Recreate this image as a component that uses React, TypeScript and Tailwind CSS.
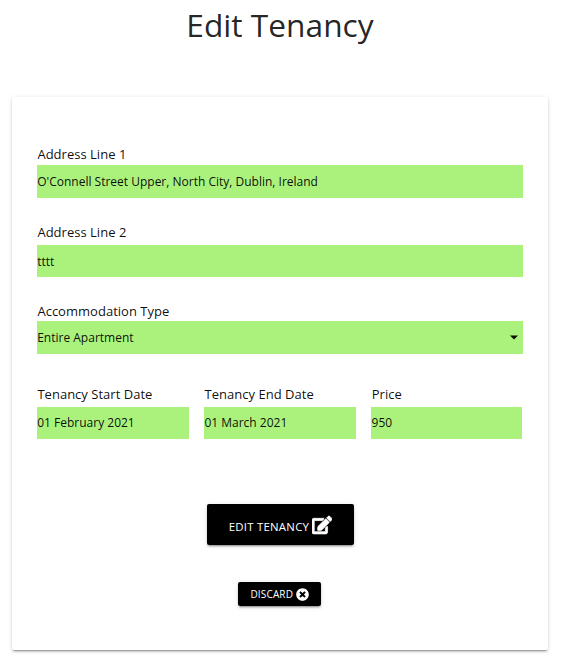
import React from 'react';
import { FaEdit, FaTimesCircle } from 'react-icons/fa';

const shadow =
  'shadow-[0_3px_1px_-2px_rgba(0,0,0,0.2),0_2px_2px_0_rgba(0,0,0,0.14),0_1px_5px_0_rgba(0,0,0,0.12)]';

type FieldProps = { label: string; value: string; className?: string; box?: string; select?: boolean };

function Field({ label, value, className = '', box = 'h-[33px]', select = false }: FieldProps) {
  return (
    <label className={`flex flex-col ${className}`}>
      <span className="h-[21px] whitespace-nowrap pl-[0.4px] text-[13px] leading-[20px] tracking-[0.02px] text-black/95">{label}</span>
      <span className={`flex items-center justify-between bg-[#abf27d] pl-[0.2px] text-[12px] text-black/95 ${box}`}>
        <span className="whitespace-nowrap">{value}</span>
        {select && (
          <svg className="mr-1 h-[5px] w-[10px]" viewBox="0 0 10 5" fill="currentColor">
            <path d="M1 0.5h8l-4 4z" />
          </svg>
        )}
      </span>
    </label>
  );
}

export default function App() {
  return (
    <main className="h-[662px] w-[565px] overflow-hidden bg-white font-['Open_Sans','Noto_Sans',sans-serif]">
      <h1 className="h-[97px] pr-[5px] pt-[4px] text-center text-[31.7px] leading-[42px] text-black/87">Edit Tenancy</h1>
      <form className={`ml-3 h-[553px] w-[536px] rounded-[2px] bg-white px-[25px] pt-[47px] ${shadow}`}>
        <Field label="Address Line 1" value="O'Connell Street Upper, North City, Dublin, Ireland" />
        <Field label="Address Line 2" value="tttt" className="mt-[24px]" box="mt-[2px] h-[32px] pt-px" />
        <Field label="Accommodation Type" value="Entire Apartment" className="mt-[24px]" box="-mt-px h-[33px]" select />
        <div className="mt-[30px] flex gap-[15.6px]">
          <Field label="Tenancy Start Date" value="01 February 2021" className="w-[151.6px]" box="mt-[2px] h-[32px]" />
          <Field label="Tenancy End Date" value="01 March 2021" className="w-[151.6px]" box="mt-[2px] h-[32px]" />
          <Field label="Price" value="950" className="w-[151px]" box="mt-[2px] h-[32px]" />
        </div>
        <div className="mt-[65px] flex flex-col items-center">
          <button
            type="button"
            className={`ml-[0.4px] flex h-[41px] w-[147px] items-center justify-center gap-[2.5px] rounded-[2px] bg-black pt-px font-['Open_Sans'] text-[11.4px] font-medium tracking-[0.25px] text-white ${shadow}`}
          >
            <span className="pt-[3px] whitespace-nowrap">EDIT TENANCY</span>
            <FaEdit className="size-[20px]" stroke="currentColor" strokeWidth={22} />
          </button>
          <button
            type="button"
            className={`mr-[0.4px] mt-[37px] flex h-[24px] w-[83px] items-center justify-center gap-[3px] rounded-[2px] bg-black font-['Open_Sans'] text-[10px] font-medium text-white ${shadow}`}
          >
            <span className="pt-px whitespace-nowrap tracking-[0.15px]">DISCARD</span>
            <FaTimesCircle className="size-[13px]" />
          </button>
        </div>
      </form>
    </main>
  );
}
